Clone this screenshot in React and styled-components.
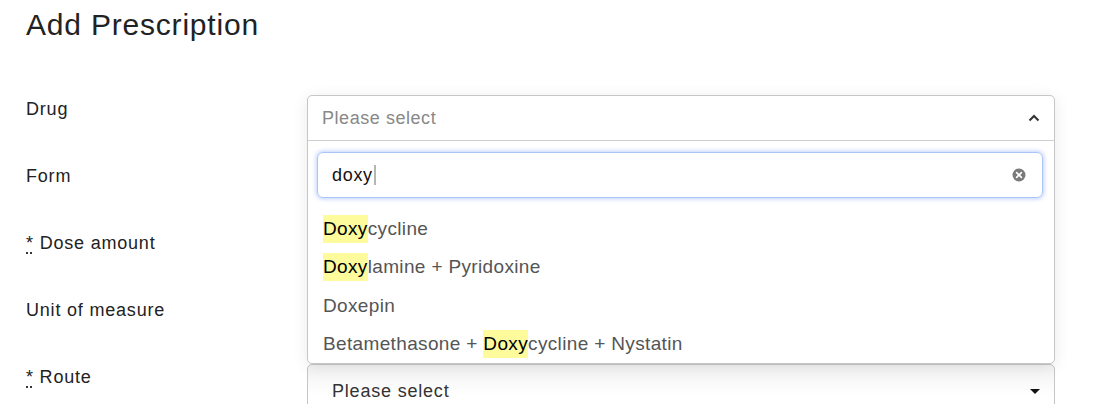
import React from 'react'
import styled, { createGlobalStyle } from 'styled-components'

const GlobalStyle = createGlobalStyle`
  html, body {
    margin: 0;
    padding: 0;
    background: #ffffff;
  }
  body {
    font-family: 'Liberation Sans', Arial, Helvetica, sans-serif;
    color: #222;
  }
`

const options = [
  { before: '', match: 'Doxy', after: 'cycline' },
  { before: '', match: 'Doxy', after: 'lamine + Pyridoxine' },
  { before: 'Doxepin', match: '', after: '' },
  { before: 'Betamethasone + ', match: 'Doxy', after: 'cycline + Nystatin' },
]

const fields = [
  { label: 'Form' },
  { label: 'Dose amount', required: true },
  { label: 'Unit of measure' },
]

const ChevronUp = () => (
  <svg width="12" height="8" viewBox="0 0 12 8">
    <polyline points="1.5,6.5 6,2 10.5,6.5" fill="none" stroke="#333" strokeWidth="2" strokeLinejoin="miter" />
  </svg>
)

const CaretDown = () => (
  <svg width="10" height="5" viewBox="0 0 10 5">
    <polygon points="0,0 10,0 5,5" fill="#111" />
  </svg>
)

const ClearIcon = () => (
  <svg width="14" height="14" viewBox="0 0 14 14">
    <circle cx="7" cy="7" r="6.5" fill="#7a7a7a" />
    <path d="M4.6 4.6 L9.4 9.4 M9.4 4.6 L4.6 9.4" stroke="#fff" strokeWidth="1.6" strokeLinecap="round" />
  </svg>
)

const App = () => {
  return (
    <Page>
      <GlobalStyle />
      <Title>Add Prescription</Title>
      <Form>
        <Row>
          <Label>Drug</Label>
          <Control>
            <Dropdown>
              <DropHeader>
                <Placeholder>Please select</Placeholder>
                <ChevronUp />
              </DropHeader>
              <SearchWrap>
                <SearchBox>
                  <Query>doxy</Query>
                  <Cursor />
                  <Clear><ClearIcon /></Clear>
                </SearchBox>
              </SearchWrap>
              <OptionList>
                {options.map((o, i) => (
                  <Option key={i}>
                    {o.before}
                    {o.match && <Mark>{o.match}</Mark>}
                    {o.after}
                  </Option>
                ))}
              </OptionList>
            </Dropdown>
          </Control>
        </Row>

        {fields.map((f) => (
          <Row key={f.label}>
            <Label>
              {f.required && <Req title="required">*</Req>}
              {f.required && ' '}
              {f.label}
            </Label>
            <Control />
          </Row>
        ))}

        <Row>
          <Label><Req title="required">*</Req> Route</Label>
          <Control>
            <SelectBox>
              <SelectText>Please select</SelectText>
              <CaretDown />
            </SelectBox>
          </Control>
        </Row>
      </Form>
    </Page>
  )
}

export default App

const Page = styled.div`
  width: 100%;
  box-sizing: border-box;
  padding: 7px 61px 0 26px;
  height: 404px;
  overflow: hidden;
`

const Title = styled.h1`
  margin: 0;
  font-size: 30px;
  line-height: 36px;
  font-weight: 400;
  letter-spacing: 0.8px;
  color: #222;
`

const Form = styled.div`
  margin-top: 52px;
  display: flex;
  flex-direction: column;
`

const Row = styled.div`
  display: grid;
  grid-template-columns: 281px 1fr;
  height: 67px;
`

const Label = styled.div`
  padding-top: 2px;
  font-size: 18px;
  line-height: 24px;
  letter-spacing: 0.8px;
  color: #222;
`

const Req = styled.abbr`
  text-decoration: underline dotted;
  text-underline-offset: 4px;
  cursor: help;
`

const Control = styled.div`
  position: relative;
`

const Dropdown = styled.div`
  position: absolute;
  top: 0;
  left: 0;
  right: 0;
  z-index: 5;
  background: #fff;
  border: 1px solid #c6c6c6;
  border-radius: 5px;
  box-shadow: 0 3px 16px rgba(0, 0, 0, 0.09);
  overflow: hidden;
`

const DropHeader = styled.div`
  height: 44px;
  display: flex;
  align-items: center;
  justify-content: space-between;
  padding: 0 14px 0 14px;
  border-bottom: 1px solid #cfcfcf;
`

const Placeholder = styled.span`
  font-size: 18px;
  line-height: 24px;
  letter-spacing: 0.55px;
  color: #888;
`

const SearchWrap = styled.div`
  padding: 11px 11px 12px 9px;
`

const SearchBox = styled.div`
  height: 46px;
  box-sizing: border-box;
  display: flex;
  align-items: center;
  padding: 0 16px 0 14px;
  border: 1px solid #a9c6f5;
  border-radius: 6px;
  box-shadow: 0 0 4px 1px rgba(110, 150, 250, 0.45);
`

const Query = styled.span`
  font-size: 18px;
  line-height: 24px;
  letter-spacing: 0.7px;
  color: #111;
`

const Cursor = styled.span`
  width: 2px;
  height: 20px;
  margin-left: 1px;
  background: #b5b5b5;
`

const Clear = styled.span`
  margin-left: auto;
  display: flex;
`

const OptionList = styled.div`
  display: flex;
  flex-direction: column;
`

const Option = styled.div`
  height: 38.3px;
  line-height: 38px;
  padding-left: 15px;
  font-size: 19px;
  letter-spacing: 0.35px;
  color: #555;
  white-space: nowrap;
`

const Mark = styled.span`
  display: inline-block;
  line-height: 28px;
  background: #fdfb9c;
  color: #000;
`

const SelectBox = styled.div`
  margin-top: 1px;
  height: 54px;
  box-sizing: border-box;
  display: flex;
  align-items: center;
  justify-content: space-between;
  padding: 0 14px 0 24px;
  border: 1px solid #c6c6c6;
  border-radius: 5px;
  background: linear-gradient(#f2f2f2, #ffffff 60%);
`

const SelectText = styled.span`
  font-size: 18px;
  line-height: 24px;
  letter-spacing: 0.8px;
  color: #333;
`
